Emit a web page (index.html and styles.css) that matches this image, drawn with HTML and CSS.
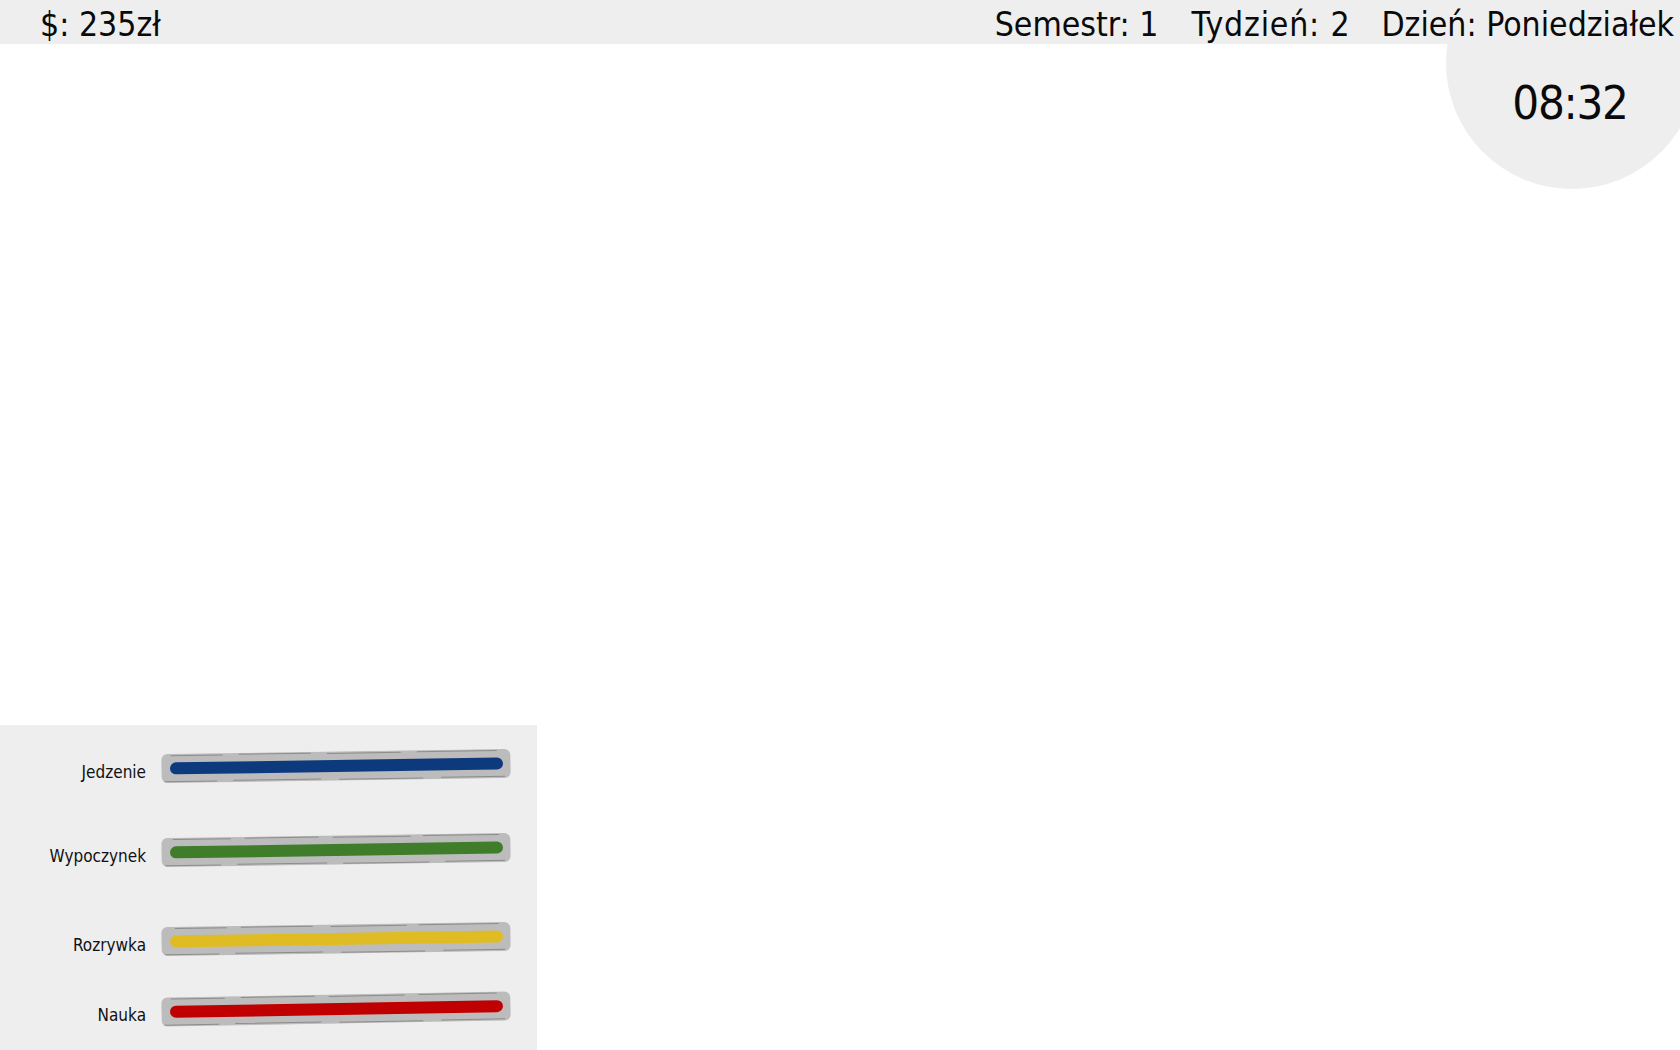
FILE: index.html
```html
<!DOCTYPE html>
<html lang="pl">
<head>
<meta charset="utf-8">
<title>Gra</title>
<link rel="stylesheet" href="styles.css">
</head>
<body>
<div class="screen">
  <header class="topbar">
    <div class="money">$: 235zł</div>
    <div class="calendar">
      <span>Semestr: 1</span>
      <span>Tydzień: 2</span>
      <span>Dzień: Poniedziałek</span>
    </div>
  </header>
  <div class="clock"><span class="clock-time">08:32</span></div>
  <div class="spacer"></div>
  <section class="needs">
    <div class="need need-food">
      <div class="need-label">Jedzenie</div>
      <svg class="need-bar" width="350" height="30" viewBox="0 0 350 30">
        <rect x="0.5" y="0.5" width="349" height="29" rx="6" fill="#bcbcbc"/>
        <path class="sketch" d="M10 2.2 H62 M78 1.8 H150 M166 2.3 H240 M256 1.9 H336"/>
        <path class="sketch" d="M3 28.2 H56 M72 27.8 H160 M178 28.3 H262 M280 27.8 H344"/>
        <rect x="9" y="9" width="333" height="12" rx="6" fill="#0d3a7c"/>
      </svg>
    </div>
    <div class="need need-rest">
      <div class="need-label">Wypoczynek</div>
      <svg class="need-bar" width="350" height="30" viewBox="0 0 350 30">
        <rect x="0.5" y="0.5" width="349" height="29" rx="6" fill="#bcbcbc"/>
        <path class="sketch" d="M12 2.2 H70 M84 1.8 H158 M172 2.3 H250 M262 1.9 H338"/>
        <path class="sketch" d="M4 28.2 H60 M76 27.8 H166 M182 28.3 H268 M284 27.8 H344"/>
        <rect x="9" y="9" width="333" height="12" rx="6" fill="#3f7d2b"/>
      </svg>
    </div>
    <div class="need need-fun">
      <div class="need-label">Rozrywka</div>
      <svg class="need-bar" width="350" height="30" viewBox="0 0 350 30">
        <rect x="0.5" y="0.5" width="349" height="29" rx="6" fill="#bcbcbc"/>
        <path class="sketch" d="M14 2.2 H66 M80 1.8 H152 M170 2.3 H246 M258 1.9 H338"/>
        <path class="sketch" d="M4 28.2 H58 M74 27.8 H162 M180 28.3 H264 M282 27.8 H344"/>
        <rect x="9" y="9" width="333" height="12" rx="6" fill="#e0bc24"/>
      </svg>
    </div>
    <div class="need need-study">
      <div class="need-label">Nauka</div>
      <svg class="need-bar tilt-more" width="350" height="30" viewBox="0 0 350 30">
        <rect x="0.5" y="0.5" width="349" height="29" rx="6" fill="#bcbcbc"/>
        <path class="sketch" d="M10 2.2 H64 M80 1.8 H154 M168 2.3 H244 M258 1.9 H336"/>
        <path class="sketch" d="M3 28.2 H58 M74 27.8 H160 M178 28.3 H262 M280 27.8 H344"/>
        <rect x="9" y="9" width="333" height="12" rx="6" fill="#c00000"/>
      </svg>
    </div>
  </section>
</div>
</body>
</html>
```

FILE: styles.css
```css
html, body {
  margin: 0;
  padding: 0;
  background: #ffffff;
}

body {
  width: 1680px;
  height: 1050px;
  overflow: hidden;
  font-family: "DejaVu Sans Condensed", "DejaVu Sans", sans-serif;
  color: #0a0a0a;
}

.screen {
  position: relative;
  width: 1680px;
  height: 1050px;
  display: flex;
  flex-direction: column;
  overflow: hidden;
}

.topbar {
  position: relative;
  z-index: 2;
  height: 44px;
  box-sizing: border-box;
  flex: 0 0 auto;
  background: #eeeeee;
  display: flex;
  justify-content: space-between;
  align-items: flex-start;
  padding: 8px 6px 0 40px;
  font-size: 33.5px;
  line-height: 33px;
  white-space: nowrap;
}

.calendar {
  display: flex;
  gap: 31px;
}

.calendar span:nth-child(2) {
  letter-spacing: 0.8px;
}

.calendar span:first-child {
  margin-right: 2px;
}

.clock {
  position: absolute;
  z-index: 1;
  left: 1446px;
  top: -63px;
  width: 252px;
  height: 252px;
  border-radius: 50%;
  background: #eeeeee;
  display: flex;
  justify-content: center;
  box-sizing: border-box;
  padding-top: 143px;
}

.clock-time {
  font-size: 47px;
  line-height: 46px;
  letter-spacing: -1.3px;
  margin-right: 4px;
}

.spacer {
  flex: 1 1 auto;
}

.needs {
  flex: 0 0 auto;
  width: 537px;
  height: 325px;
  box-sizing: border-box;
  background: #eeeeee;
  padding-top: 21px;
  display: flex;
  flex-direction: column;
}

.need {
  height: 40px;
  display: flex;
  align-items: center;
}

.need-rest { margin-top: 44px; }
.need-fun { margin-top: 49px; }
.need-study { margin-top: 30px; }

.need-label {
  width: 146px;
  text-align: right;
  font-size: 17px;
  line-height: 20px;
  margin-top: 12px;
  color: #111111;
}

.need-bar {
  display: block;
  margin-left: 15px;
  transform: rotate(-0.85deg);
}

.need-bar.tilt-more {
  transform: rotate(-1deg);
}

.sketch {
  fill: none;
  stroke: #6e6e6e;
  stroke-width: 1;
  opacity: 0.6;
}
```
